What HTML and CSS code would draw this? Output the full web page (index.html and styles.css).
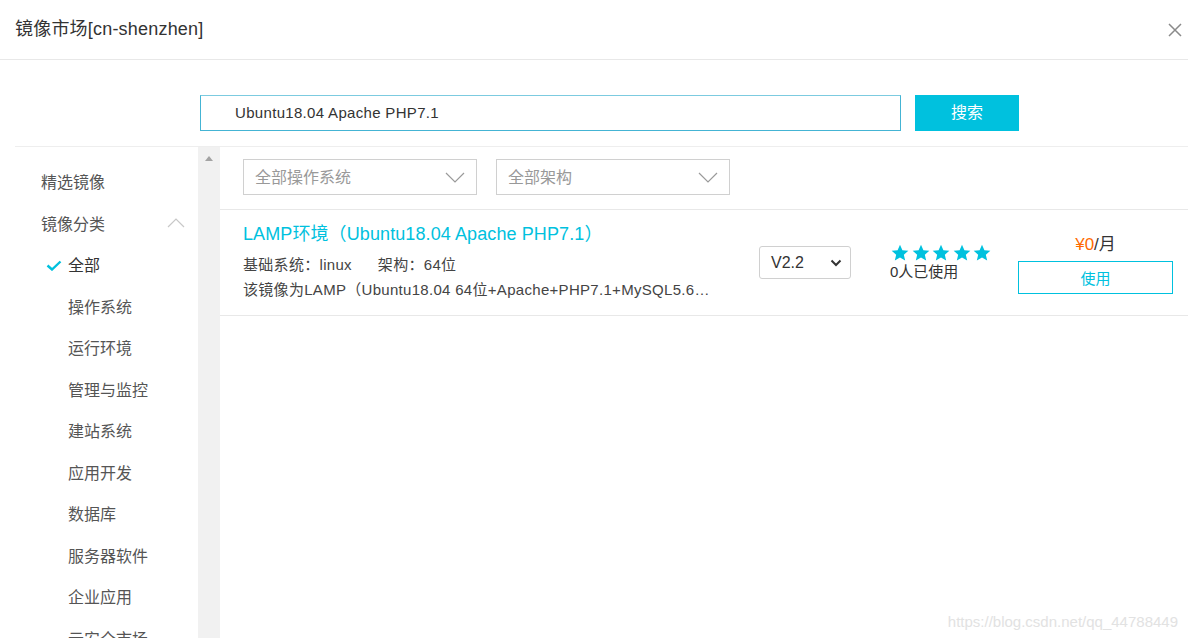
FILE: index.html
```html
<!DOCTYPE html>
<html lang="zh-CN">
<head>
<meta charset="utf-8">
<title>镜像市场</title>
<link rel="stylesheet" href="styles.css">
</head>
<body>
<div class="dialog">
  <header class="header">
    <h1 class="title">镜像市场[cn-shenzhen]</h1>
    <button class="close" aria-label="关闭">
      <svg width="14" height="14" viewBox="0 0 14 14"><path d="M1 1L13 13M13 1L1 13" stroke="#8a8a8a" stroke-width="1.5" fill="none"/></svg>
    </button>
  </header>

  <div class="search">
    <div class="search-input">Ubuntu18.04 Apache PHP7.1</div>
    <button class="search-btn">搜索</button>
  </div>

  <div class="main">
    <nav class="sidebar">
      <div class="nav-item">精选镜像</div>
      <div class="nav-item nav-group">镜像分类
        <svg class="chev-up" width="18" height="10" viewBox="0 0 18 10"><path d="M1 9L9 1L17 9" stroke="#c8c8c8" stroke-width="1.2" fill="none"/></svg>
      </div>
      <div class="nav-sub active">
        <span class="check"><svg width="16" height="11" viewBox="0 0 16 11"><path d="M1.5 5.5L6 9.5L14.5 1.5" stroke="#00c1de" stroke-width="2.4" fill="none"/></svg></span>全部
      </div>
      <div class="nav-sub"><span class="check"></span>操作系统</div>
      <div class="nav-sub"><span class="check"></span>运行环境</div>
      <div class="nav-sub"><span class="check"></span>管理与监控</div>
      <div class="nav-sub"><span class="check"></span>建站系统</div>
      <div class="nav-sub"><span class="check"></span>应用开发</div>
      <div class="nav-sub"><span class="check"></span>数据库</div>
      <div class="nav-sub"><span class="check"></span>服务器软件</div>
      <div class="nav-sub"><span class="check"></span>企业应用</div>
      <div class="nav-sub"><span class="check"></span>云安全市场</div>
    </nav>

    <div class="scrollbar">
      <span class="scroll-up"></span>
    </div>

    <section class="content">
      <div class="filters">
        <div class="filter">
          <span>全部操作系统</span>
          <svg width="20" height="11" viewBox="0 0 20 11"><path d="M1 1L10 10L19 1" stroke="#9a9a9a" stroke-width="1.2" fill="none"/></svg>
        </div>
        <div class="filter">
          <span>全部架构</span>
          <svg width="20" height="11" viewBox="0 0 20 11"><path d="M1 1L10 10L19 1" stroke="#9a9a9a" stroke-width="1.2" fill="none"/></svg>
        </div>
      </div>

      <div class="item">
        <div class="info">
          <div class="item-title">LAMP环境（Ubuntu18.04 Apache PHP7.1）</div>
          <div class="meta"><span class="meta-sys">基础系统：linux</span><span>架构：64位</span></div>
          <div class="desc">该镜像为LAMP（Ubuntu18.04 64位+Apache+PHP7.1+MySQL5.6…</div>
        </div>
        <div class="version">
          <span>V2.2</span>
          <svg width="12" height="8" viewBox="0 0 12 8"><path d="M1.5 1.5L6 6L10.5 1.5" stroke="#333" stroke-width="2" fill="none"/></svg>
        </div>
        <div class="rating">
          <div class="stars">
            <svg viewBox="0 0 24 24"><polygon points="12,2 14.9,8.6 22,9.3 16.6,14 18.2,21 12,17.3 5.8,21 7.4,14 2,9.3 9.1,8.6"/></svg>
            <svg viewBox="0 0 24 24"><polygon points="12,2 14.9,8.6 22,9.3 16.6,14 18.2,21 12,17.3 5.8,21 7.4,14 2,9.3 9.1,8.6"/></svg>
            <svg viewBox="0 0 24 24"><polygon points="12,2 14.9,8.6 22,9.3 16.6,14 18.2,21 12,17.3 5.8,21 7.4,14 2,9.3 9.1,8.6"/></svg>
            <svg viewBox="0 0 24 24"><polygon points="12,2 14.9,8.6 22,9.3 16.6,14 18.2,21 12,17.3 5.8,21 7.4,14 2,9.3 9.1,8.6"/></svg>
            <svg viewBox="0 0 24 24"><polygon points="12,2 14.9,8.6 22,9.3 16.6,14 18.2,21 12,17.3 5.8,21 7.4,14 2,9.3 9.1,8.6"/></svg>
          </div>
          <div class="used">0人已使用</div>
        </div>
        <div class="buy">
          <div class="price"><span class="amount">¥0</span>/月</div>
          <button class="use-btn">使用</button>
        </div>
      </div>
    </section>
  </div>

  <div class="watermark">https://blog.csdn.net/qq_44788449</div>
</div>
</body>
</html>
```

FILE: styles.css
```css
* { box-sizing: border-box; }

html, body {
  margin: 0;
  padding: 0;
  background: #fff;
}

body {
  width: 1188px;
  height: 638px;
  overflow: hidden;
  font-family: "Liberation Sans", "Noto Sans CJK SC", sans-serif;
  color: #333;
}

.dialog {
  position: relative;
  height: 638px;
}

.header {
  height: 60px;
  border-bottom: 1px solid #e8e8e8;
  display: flex;
  align-items: center;
  justify-content: space-between;
  padding: 0 4px 0 15px;
}

.title {
  margin: 0;
  font-size: 18px;
  font-weight: normal;
  color: #333;
  line-height: 61px;
  letter-spacing: 0.2px;
}

.close {
  border: 0;
  background: none;
  padding: 0;
  width: 14px;
  height: 14px;
  margin-right: 2px;
  display: flex;
}

.search {
  display: flex;
  padding: 35px 0 15px 200px;
  gap: 14px;
}

.search-input {
  width: 701px;
  height: 36px;
  border: 1px solid #44b4d4;
  border-top-color: #7ccbe0;
  padding-left: 34px;
  font-size: 15px;
  line-height: 34px;
  color: #333;
  letter-spacing: 0.32px;
}

.search-btn {
  width: 104px;
  height: 36px;
  border: 0;
  background: #00c1de;
  color: #fff;
  font-family: inherit;
  font-size: 16px;
  line-height: 34px;
  padding: 0;
}

.main {
  margin-left: 15px;
  border-top: 1px solid #eeeeee;
  display: flex;
  height: 492px;
}

.sidebar {
  width: 183px;
  padding-top: 15px;
  flex-shrink: 0;
}

.nav-item {
  height: 41.5px;
  line-height: 41.5px;
  padding-left: 26px;
  font-size: 16px;
  color: #555;
}

.nav-group {
  display: flex;
  align-items: center;
  justify-content: space-between;
  padding-right: 13px;
}

.chev-up { margin-top: -2px; }

.nav-sub {
  height: 41.5px;
  line-height: 41.5px;
  padding-left: 31px;
  font-size: 16px;
  color: #555;
  display: flex;
  align-items: center;
}

.check {
  width: 22px;
  flex-shrink: 0;
  display: flex;
  align-items: center;
}

.active { color: #333; }

.scrollbar {
  width: 22px;
  flex-shrink: 0;
  background: #f1f1f1;
  display: flex;
  justify-content: center;
  padding-top: 9px;
}

.scroll-up {
  width: 0;
  height: 0;
  border-left: 4.5px solid transparent;
  border-right: 4.5px solid transparent;
  border-bottom: 5px solid #a3a3a3;
}

.content {
  flex: 1;
}

.filters {
  display: flex;
  gap: 19px;
  padding: 12px 0 14px 23px;
  border-bottom: 1px solid #e8e8e8;
}

.filter {
  width: 234px;
  height: 36px;
  border: 1px solid #d0d0d0;
  display: flex;
  align-items: center;
  justify-content: space-between;
  padding: 0 11px 2px 11px;
  font-size: 16px;
  color: #999;
}

.filter svg { margin-top: 2px; }

.item {
  display: flex;
  align-items: flex-start;
  padding: 12px 15px 13px 23px;
  border-bottom: 1px solid #e8e8e8;
}

.info {
  width: 516px;
}

.item-title {
  font-size: 18px;
  line-height: 24px;
  color: #00c1de;
  letter-spacing: 0.1px;
}

.meta {
  margin-top: 7px;
  font-size: 15px;
  line-height: 24px;
  color: #444;
  letter-spacing: 0.3px;
}

.meta-sys { margin-right: 26px; }

.desc {
  font-size: 15px;
  line-height: 25px;
  color: #444;
  white-space: nowrap;
  letter-spacing: 0.3px;
}

.version {
  margin-top: 24px;
  width: 92px;
  height: 33px;
  border: 1px solid #d0d0d0;
  border-radius: 3px;
  display: flex;
  align-items: center;
  justify-content: space-between;
  padding: 0 8px 0 11px;
  font-size: 16px;
  color: #333;
}

.rating {
  margin-top: 21px;
  margin-left: 39px;
  width: 128px;
}

.stars {
  display: flex;
  gap: 0.6px;
}

.stars svg {
  width: 20px;
  height: 20px;
  fill: #00c1de;
}

.used {
  font-size: 15px;
  line-height: 18px;
  color: #333;
}

.buy {
  margin-top: 12px;
  width: 155px;
  display: flex;
  flex-direction: column;
  align-items: center;
}

.price {
  font-size: 17px;
  line-height: 22px;
  color: #333;
}

.amount { color: #ff6a00; }

.use-btn {
  margin-top: 5px;
  width: 155px;
  height: 33px;
  border: 1px solid #00c1de;
  background: #fff;
  color: #00c1de;
  font-family: inherit;
  font-size: 15px;
  padding: 0;
}

.watermark {
  position: absolute;
  right: 10px;
  bottom: 8px;
  font-size: 15px;
  color: #e2e2e2;
}
```
